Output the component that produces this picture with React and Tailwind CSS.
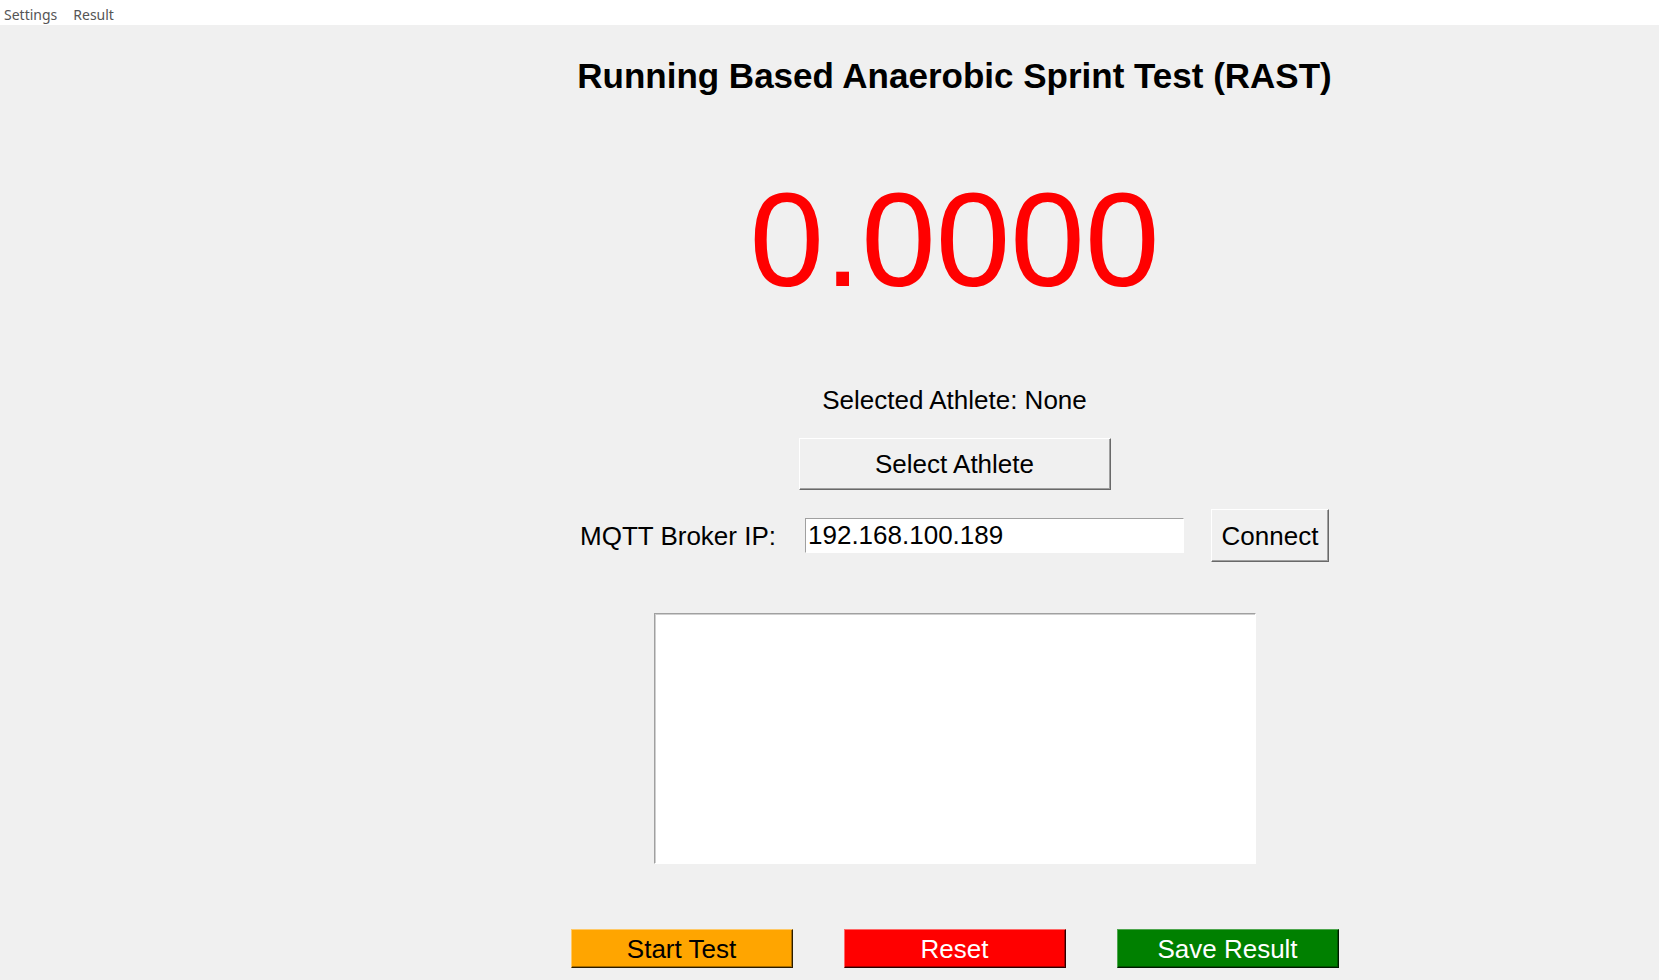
import { useState } from 'react';

const raised =
  'border border-t-white border-l-white border-b-[#696969] border-r-[#696969] shadow-[inset_-1px_-1px_0_#a0a0a0] bg-[#f0f0f0]';

const ActionButton = ({ label, className, onClick }) => (
  <button
    onClick={onClick}
    className={`w-[222px] h-[39px] leading-none text-[26px] ${className}`}
  >
    {label}
  </button>
);

export default function App() {
  const [athlete] = useState('None');
  const [brokerIp, setBrokerIp] = useState('192.168.100.189');
  const [elapsed, setElapsed] = useState(0);
  const [log, setLog] = useState('');

  return (
    <div className="w-[1659px] h-[980px] bg-[#f0f0f0] overflow-hidden font-['Liberation_Sans',Arial,sans-serif] text-black">
      {/* Menu bar */}
      <div className="h-[25px] pt-[3px] bg-white flex items-center text-[14px] text-[#555555] font-['Noto_Sans',sans-serif]">
        <span className="ml-[4px]">Settings</span>
        <span className="ml-[16px]">Result</span>
      </div>

      <div className="pl-[250px] flex flex-col items-center">
        <h1 className="mt-[33px] text-[35px] font-bold leading-none">
          Running Based Anaerobic Sprint Test (RAST)
        </h1>

        <div className="mt-[80px] text-[134px] leading-none text-[#ff0000]">
          {elapsed.toFixed(4)}
        </div>

        <div className="mt-[80px] text-[26px] leading-none">
          Selected Athlete: {athlete}
        </div>

        <button className={`mt-[25px] w-[312px] h-[52px] text-[26px] leading-none ${raised}`}>
          Select Athlete
        </button>

        <div className="mt-[19px] flex items-center">
          <span className="text-[26px] leading-none w-[196px]">MQTT Broker IP:</span>
          <input
            value={brokerIp}
            onChange={(e) => setBrokerIp(e.target.value)}
            className="ml-[29px] w-[379px] h-[35px] bg-white text-[26px] leading-none pl-[2px] outline-none border border-t-[#a0a0a0] border-l-[#a0a0a0] border-b-white border-r-white"
          />
          <button className={`ml-[27px] w-[118px] h-[53px] text-[26px] leading-none ${raised}`}>
            Connect
          </button>
        </div>

        <textarea
          value={log}
          onChange={(e) => setLog(e.target.value)}
          className="mt-[51px] w-[602px] h-[251px] bg-white resize-none outline-none border border-t-[#a0a0a0] border-l-[#a0a0a0] border-b-white border-r-white shadow-[inset_1px_1px_0_#cfcfcf]"
        />

        <div className="mt-[65px] flex gap-[51px]">
          <ActionButton
            label="Start Test"
            onClick={() => setElapsed(0)}
            className="bg-[#ffa500] text-black border border-t-[#ffc966] border-l-[#ffc966] border-b-[#2a1c00] border-r-[#2a1c00] shadow-[inset_-1px_-1px_0_#a86d00]"
          />
          <ActionButton
            label="Reset"
            onClick={() => setElapsed(0)}
            className="bg-[#ff0000] text-white border border-t-[#ff6666] border-l-[#ff6666] border-b-[#2a0000] border-r-[#2a0000] shadow-[inset_-1px_-1px_0_#a80000]"
          />
          <ActionButton
            label="Save Result"
            className="bg-[#008000] text-white border border-t-[#4da64d] border-l-[#4da64d] border-b-[#001a00] border-r-[#001a00] shadow-[inset_-1px_-1px_0_#005500]"
          />
        </div>
      </div>
    </div>
  );
}
